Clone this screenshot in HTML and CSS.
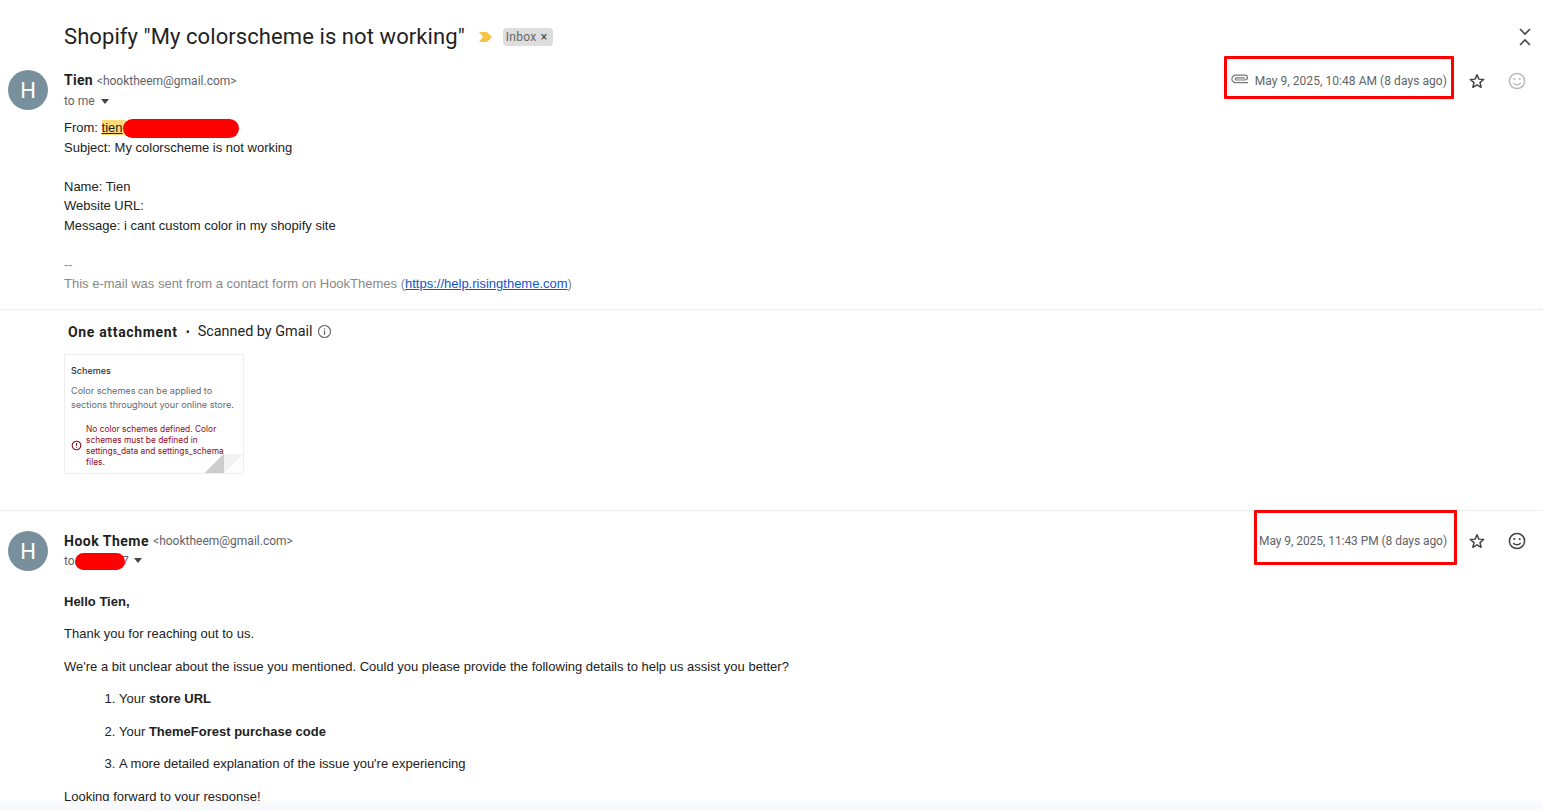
FILE: index.html
```html
<!DOCTYPE html>
<html lang="en">
<head>
<meta charset="utf-8">
<title>Shopify "My colorscheme is not working"</title>
<link rel="stylesheet" href="styles.css">
</head>
<body>
<div class="viewport">
  <header class="subject-row">
    <h1 class="subject">Shopify "My colorscheme is not working"</h1>
    <svg class="importance" width="14" height="12" viewBox="0 0 14 12"><path d="M0 1h8l5 5-5 5H0l4-5z" fill="#f6c344"/></svg>
    <span class="chip">Inbox <span class="chip-x">×</span></span>
    <svg class="collapse" width="14" height="20" viewBox="0 0 14 20"><path d="M2 2l5 5 5-5M2 18l5-5 5 5" fill="none" stroke="#444" stroke-width="1.6"/></svg>
  </header>

  <article class="message first">
    <div class="avatar">H</div>
    <div class="message-main">
      <div class="meta">
        <div class="who">
          <div class="from"><b>Tien</b> <span class="addr">&lt;hooktheem@gmail.com&gt;</span></div>
          <div class="to">to me <span class="caret"></span></div>
        </div>
        <div class="actions">
          <svg class="clip" width="18" height="11" viewBox="0 0 18 11"><path d="M17 8.6H4.6a3.6 3.6 0 0 1 0-7.4H14a2.3 2.3 0 0 1 0 4.8H5.4a1 1 0 0 1 0-2.2H14" fill="none" stroke="#777" stroke-width="1.2"/></svg>
          <span class="date">May 9, 2025, 10:48 AM (8 days ago)</span>
          <svg class="star" width="18" height="18" viewBox="0 0 24 24"><path d="M12 3.6l2.5 5.9 6.4.5-4.9 4.2 1.5 6.2L12 17.1l-5.5 3.3L8 14.2 3.1 10l6.4-.5z" fill="none" stroke="#444" stroke-width="2" stroke-linejoin="round"/></svg>
          <svg class="smile" width="20" height="20" viewBox="0 0 20 20"><circle cx="10" cy="10" r="7.6" fill="none" stroke="#bbb" stroke-width="1.5"/><circle cx="7.3" cy="8" r="1.1" fill="#bbb"/><circle cx="12.7" cy="8" r="1.1" fill="#bbb"/><path d="M6.3 11.8c1.8 2.6 5.6 2.6 7.4 0" fill="none" stroke="#bbb" stroke-width="1.4"/></svg>
        </div>
      </div>
      <div class="body-text">
        <div>From: <span class="hl">tien</span></div>
        <div>Subject: My colorscheme is not working</div>
        <br>
        <div>Name: Tien</div>
        <div>Website URL:</div>
        <div>Message: i cant custom color in my shopify site</div>
        <br>
        <div class="muted">--</div>
        <div class="muted">This e-mail was sent from a contact form on HookThemes (<a href="#">https://help.risingtheme.com</a>)</div>
      </div>
    </div>
  </article>

  <section class="attachments">
    <div class="attach-head"><b>One attachment</b><span class="dot">•</span><span class="scanned">Scanned by Gmail</span>
      <svg width="15" height="15" viewBox="0 0 16 16"><circle cx="8" cy="8" r="6.4" fill="none" stroke="#5f6368" stroke-width="1.2"/><path d="M8 7v4.4M8 4.4v1.4" stroke="#5f6368" stroke-width="1.3"/></svg>
    </div>
    <div class="thumb">
      <div class="thumb-title">Schemes</div>
      <p class="thumb-desc">Color schemes can be applied to sections throughout your online store.</p>
      <div class="thumb-error">
        <svg width="11" height="11" viewBox="0 0 12 12"><circle cx="6" cy="6" r="4.7" fill="none" stroke="#8e0b21" stroke-width="1.2"/><path d="M6 3.2v3.4M6 7.8v1" stroke="#8e0b21" stroke-width="1.2"/></svg>
        <p>No color schemes defined. Color schemes must be defined in settings_data and settings_schema files.</p>
      </div>
      <div class="fold"></div>
    </div>
  </section>

  <article class="message second">
    <div class="avatar">H</div>
    <div class="message-main">
      <div class="meta">
        <div class="who">
          <div class="from"><b>Hook Theme</b> <span class="addr">&lt;hooktheem@gmail.com&gt;</span></div>
          <div class="to to-2">to <span class="hidden-name">7</span> <span class="caret"></span></div>
        </div>
        <div class="actions">
          <span class="date">May 9, 2025, 11:43 PM (8 days ago)</span>
          <svg class="star" width="18" height="18" viewBox="0 0 24 24"><path d="M12 3.6l2.5 5.9 6.4.5-4.9 4.2 1.5 6.2L12 17.1l-5.5 3.3L8 14.2 3.1 10l6.4-.5z" fill="none" stroke="#444" stroke-width="2" stroke-linejoin="round"/></svg>
          <svg class="smile" width="20" height="20" viewBox="0 0 20 20"><circle cx="10" cy="10" r="7.6" fill="none" stroke="#444" stroke-width="1.5"/><circle cx="7.3" cy="8" r="1.1" fill="#444"/><circle cx="12.7" cy="8" r="1.1" fill="#444"/><path d="M6.3 11.8c1.8 2.6 5.6 2.6 7.4 0" fill="none" stroke="#444" stroke-width="1.4"/></svg>
        </div>
      </div>
      <div class="reply">
        <p><b>Hello Tien,</b></p>
        <p>Thank you for reaching out to us.</p>
        <p>We're a bit unclear about the issue you mentioned. Could you please provide the following details to help us assist you better?</p>
        <ol>
          <li>Your <b>store URL</b></li>
          <li>Your <b>ThemeForest purchase code</b></li>
          <li>A more detailed explanation of the issue you're experiencing</li>
        </ol>
        <p>Looking forward to your response!</p>
      </div>
    </div>
  </article>

  <div class="mark mark-a"></div>
  <div class="mark mark-b"></div>
  <div class="box box-a"></div>
  <div class="box box-b"></div>
</div>
</body>
</html>
```
FILE: styles.css
```css
* { box-sizing: border-box; }
html, body { margin: 0; height: 100%; overflow: hidden; background: #f8fafd; }
body { font-family: "Liberation Sans", Arial, sans-serif; color: #222; }
.viewport { position: relative; height: 801px; background: #fff; overflow: hidden; }

.subject-row { display: flex; align-items: center; height: 70px; padding: 4px 10px 0 64px; }
.subject { margin: 0; font: 400 22px/28px Roboto, sans-serif; color: #1f1f1f; letter-spacing: .08px; }
.importance { margin-left: 14px; }
.chip { margin-left: 10px; width: 50px; height: 18px; padding: 0 0 0 3px; background: #ddd; border-radius: 4px; font: 12px/18px Roboto, sans-serif; letter-spacing: .3px; color: #666; white-space: nowrap; }
.chip-x { color: #444; margin-left: 1px; }
.collapse { margin-left: auto; margin-right: 1px; }

.message { display: flex; }
.avatar { flex: none; width: 40px; height: 40px; margin: 0 16px 0 8px; border-radius: 50%; background: #78909c; color: #fff; font: 400 22px/41px Roboto, sans-serif; text-align: center; }
.message-main { flex: 1; min-width: 0; }
.meta { display: flex; justify-content: space-between; height: 48px; }
.from { display: flex; gap: 4px; height: 21px; font-size: 13px; line-height: 20px; }
.first .from { align-items: baseline; }
.from b { font: 700 14px/20px Roboto, sans-serif; letter-spacing: .5px; color: #1f1f1f; }
.first .from b { letter-spacing: .25px; }
.addr { font: 400 12px/20px Roboto, sans-serif; color: #5f6368; }
.to { font: 400 12px/20px Roboto, sans-serif; color: #5f6368; display: flex; align-items: center; gap: 3px; }
.to-2 { gap: 0; margin-top: -1px; }
.hidden-name { width: 54px; text-align: right; padding-left: 4px; }
.caret { display: inline-block; margin-left: 3px; border: 4px solid transparent; border-top: 5px solid #444; border-bottom: 0; }
.to-2 .caret { margin-left: 5px; }
.actions { display: flex; align-items: center; height: 22px; padding-right: 16px; }
.date { font: 400 12px/20px Roboto, sans-serif; color: #5f6368; }
.clip { flex: none; margin-right: 6px; margin-top: -3px; }
.first .date { letter-spacing: .06px; }
.second .date { letter-spacing: -.06px; }
.second .actions { margin-top: -1px; }
.star { margin-left: 21px; }
.smile { margin-left: 21px; }

.body-text { font-size: 13px; line-height: 19.5px; color: #222; }
.hl { background: #ffd97a; text-decoration: underline; display: inline-block; width: 24px; line-height: 15px; }
.muted { color: #888; }
a { color: #15c; }

.attachments { margin-top: 15px; border-top: 1px dotted #e6e6e6; padding: 12px 0 0 64px; height: 202px; border-bottom: 1px solid #eee; }
.attach-head { display: flex; align-items: center; gap: 7px; height: 20px; padding-left: 4px; font: 400 14px/20px Roboto, sans-serif; color: #1f1f1f; }
.attach-head b { font-weight: 700; letter-spacing: .66px; }
.attach-head .dot { margin: 0 1px; font-size: 12px; }
.scanned { font-size: 14.4px; margin: 1px 0 0 0; }
.attach-head svg { margin-left: -2px; }
.thumb { position: relative; width: 180px; height: 120px; margin-top: 12px; padding: 10px 6px; border: 1px solid #eee; font-family: Inter, sans-serif; overflow: hidden; }
.thumb-title { font-size: 9px; font-weight: 500; line-height: 12px; color: #303030; }
.thumb-desc { margin: 7px 0 0; font-size: 9.1px; line-height: 14px; color: #616a75; width: 170px; }
.thumb-error { display: flex; align-items: center; gap: 4px; margin: 12px -4px 0 0; }
.thumb-error svg { flex: none; }
.thumb-error p { margin: 0; font-size: 8.4px; line-height: 11px; color: #8e0b21; }
.fold { position: absolute; right: -1px; bottom: -1px; width: 40px; height: 20px; clip-path: polygon(0 100%, 20px 0, 100% 0, 20px 100%); background: linear-gradient(to right, #ccc 0 20px, #f3f3f3 20px); }

.second { padding-top: 20px; }
.reply { font-size: 13px; line-height: 20px; color: #222; margin-top: 13px; }
.reply p { margin: 0 0 12.5px; }
.reply ol { margin: 0; padding-left: 55px; }
.reply li { margin-bottom: 12.5px; }

.mark { position: absolute; height: 19px; background: #f00; border-radius: 10px; }
.mark-a { left: 123px; top: 119px; width: 116px; }
.mark-b { left: 75px; top: 553px; width: 50px; height: 17px; }
.box { position: absolute; border: 3px solid #f00; border-radius: 1px; }
.box-a { left: 1224px; top: 56px; width: 230px; height: 43px; }
.box-b { left: 1254px; top: 510px; width: 203px; height: 55px; }
```
